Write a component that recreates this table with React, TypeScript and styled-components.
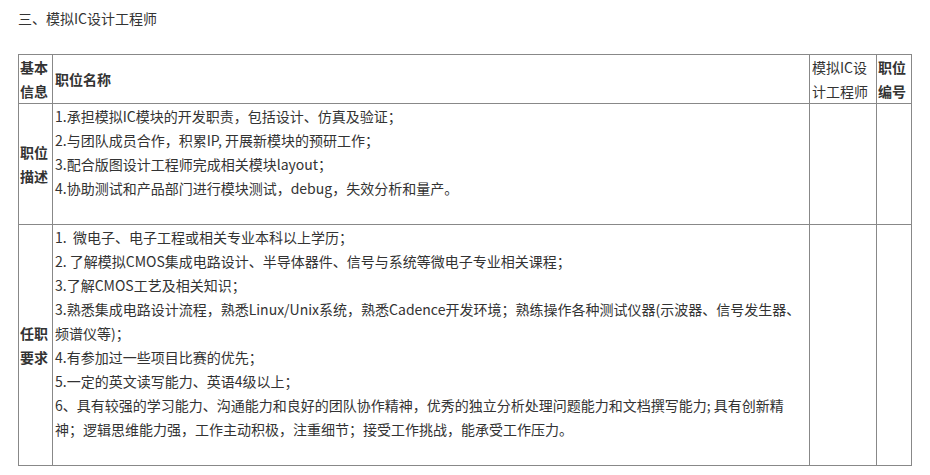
import React from "react";
import styled, { createGlobalStyle } from "styled-components";

const GlobalStyle = createGlobalStyle`
  html, body {
    margin: 0;
    padding: 0;
    background: #ffffff;
  }
  body {
    font-family: "Noto Sans CJK SC", "Noto Sans", sans-serif;
    font-size: 14px;
    color: #333333;
  }
`;

const duties = [
  "1.承担模拟IC模块的开发职责，包括设计、仿真及验证；",
  "2.与团队成员合作，积累IP, 开展新模块的预研工作；",
  "3.配合版图设计工程师完成相关模块layout；",
  "4.协助测试和产品部门进行模块测试，debug，失效分析和量产。",
];

const requirements = [
  "1.\u00a0 微电子、电子工程或相关专业本科以上学历；",
  "2. 了解模拟CMOS集成电路设计、半导体器件、信号与系统等微电子专业相关课程；",
  "3.了解CMOS工艺及相关知识；",
  "3.熟悉集成电路设计流程，熟悉Linux/Unix系统，熟悉Cadence开发环境；熟练操作各种测试仪器(示波器、信号发生器、频谱仪等)；",
  "4.有参加过一些项目比赛的优先；",
  "5.一定的英文读写能力、英语4级以上；",
  "6、具有较强的学习能力、沟通能力和良好的团队协作精神，优秀的独立分析处理问题能力和文档撰写能力; 具有创新精神；逻辑思维能力强，工作主动积极，注重细节；接受工作挑战，能承受工作压力。",
];

export default function App() {
  return (
    <Page>
      <GlobalStyle />
      <Heading>三、模拟IC设计工程师</Heading>
      <Table>
        <colgroup>
          <col style={{ width: 34 }} />
          <col style={{ width: 757 }} />
          <col style={{ width: 67 }} />
          <col style={{ width: 35 }} />
        </colgroup>
        <tbody>
          <tr>
            <Label>基本信息</Label>
            <Cell $middle>
              <strong>职位名称</strong>
            </Cell>
            <Cell>模拟IC设计工程师</Cell>
            <Label>职位编号</Label>
          </tr>
          <tr>
            <Label>职位描述</Label>
            <Cell>
              {duties.map((line) => (
                <Line key={line}>{line}</Line>
              ))}
              <Line>&nbsp;</Line>
            </Cell>
            <Cell />
            <Cell />
          </tr>
          <tr>
            <Label>任职要求</Label>
            <Cell>
              {requirements.map((line) => (
                <Line key={line}>{line}</Line>
              ))}
              <Line>&nbsp;</Line>
            </Cell>
            <Cell />
            <Cell />
          </tr>
        </tbody>
      </Table>
    </Page>
  );
}

const Page = styled.div`
  padding: 6px 0 0 18px;
`;

const Heading = styled.div`
  line-height: 24px;
  margin-bottom: 24px;
`;

const Table = styled.table`
  width: 893px;
  table-layout: fixed;
  border-collapse: collapse;
  border: 1px solid #222222;
  line-height: 24px;
`;

const Cell = styled.td<{ $middle?: boolean }>`
  border: 1px solid #888888;
  padding: 0 1px 0 2px;
  vertical-align: ${(p) => (p.$middle ? "middle" : "top")};
  word-break: break-all;

  strong {
    font-weight: 700;
  }
`;

const Label = styled.td`
  border: 1px solid #888888;
  padding: 0 1px;
  vertical-align: middle;
  font-weight: 700;
  word-break: break-all;
`;

const Line = styled.p`
  margin: 0;
`;
